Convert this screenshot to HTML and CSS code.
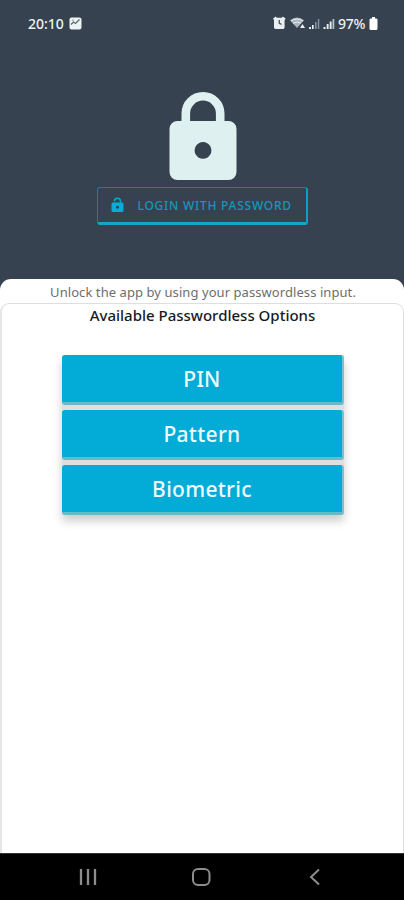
FILE: index.html
```html
<!DOCTYPE html>
<html lang="en">
<head>
<meta charset="utf-8">
<title>Unlock</title>
<link rel="stylesheet" href="styles.css">
</head>
<body>
<div class="phone">
  <div class="status">
    <span class="time">20:10</span>
    <svg class="photo" width="13" height="13" viewBox="0 0 13 13"><rect x=".5" y=".5" width="12" height="12" rx="2" fill="#eef3f5"/><path d="M2 7.500 4.500 5l2 1.500L10.500 2.500" fill="none" stroke="#5c6873" stroke-width="1.300"/><circle cx="4" cy="3.300" r=".8" fill="#7c8790"/></svg>
    <svg class="signals" width="62" height="14" viewBox="0 0 62 14" fill="#e9eef1">
      <path d="M0 2.500 2.800.5l1 1.300h5l1-1.300 2.800 2-1 1.700v7.600l-1 1.200H2l-1-1.200V4.200z"/>
      <path d="M6.300 4v3.400l2.200 1" fill="none" stroke="#46525f" stroke-width="1.300"/>
      <path d="M17 4.200Q24 -1 31 4.200L24 12z" fill="#a9b4bb"/><path d="M18 5q6-4 12 0M20 7.300q4-2.800 8 0" fill="none" stroke="#e9eef1"/>
      <path d="m27 12 2.500-4 2.500 4z"/>
      <path d="M36 11h2v2h-2zM39 9h1.700v4H39z"/><path d="M42 6h1.600v7H42zM44.800 3h1.500v10h-1.500z" fill="#84919b"/>
      <path d="M50.500 11h2v2h-2zM53.700 8h1.900v5h-1.900zM56.700 5.500h1.900V13h-1.900z"/><path d="M59.500 3h1.800v10h-1.800z" fill="#b5c0c8"/>
    </svg>
    <span class="percent">97%</span>
    <svg class="battery" width="9" height="13" viewBox="0 0 9 13"><path d="M3 0h3v1.500h1.500Q8.500 1.500 8.500 3v8.500q0 1.500-1.500 1.500H2Q.5 13 .5 11.500V3q0-1.500 1-1.500H3z" fill="#fff"/></svg>
  </div>
  <div class="hero">
    <svg class="lock" width="68" height="88" viewBox="0 0 68 88"><path d="M16.800 31V21.500a17.200 17.200 0 0 1 34.400 0V31" fill="none" stroke="#dff0f1" stroke-width="8.600"/><path fill-rule="evenodd" fill="#dff0f1" d="M8.500 29h51a8 8 0 0 1 8 8v43a8 8 0 0 1-8 8h-51a8 8 0 0 1-8-8V37a8 8 0 0 1 8-8zM34 50a8.400 8.400 0 1 0 .01 0z"/></svg>
    <button class="login">
      <svg width="13" height="16" viewBox="0 0 13 16"><path d="M3.500 4.300a3 3 0 0 1 6-.3v2" fill="none" stroke="#08a9d1" stroke-width="1.500"/><path fill-rule="evenodd" fill="#08acd5" d="M2 5.500h9Q12.500 5.500 12.500 7v6.500q0 1.500-1.500 1.500H2Q.5 15 .5 13.500V7Q.5 5.500 2 5.500zM6.500 8.700a1.500 1.500 0 1 0 .01 0z"/></svg>
      <span>LOGIN WITH PASSWORD</span>
    </button>
  </div>
  <main class="sheet">
    <p class="hint">Unlock the app by using your passwordless input.</p>
    <section class="panel">
      <h1>Available Passwordless Options</h1>
      <div class="options">
        <button class="option">PIN</button>
        <button class="option">Pattern</button>
        <button class="option">Biometric</button>
      </div>
    </section>
  </main>
  <nav class="nav">
    <svg width="404" height="47" viewBox="0 0 404 47" fill="none" stroke="#8d8d8d" stroke-width="2"><path d="M81 16v16M88 16v16M95 16v16" stroke-width="2.300"/><rect x="193" y="16" width="16.500" height="16" rx="5"/><path d="m319 16.500-8 7.500 8 7.500"/></svg>
  </nav>
</div>
</body>
</html>
```
FILE: styles.css
```css
* { box-sizing: border-box; }
body { margin: 0; font-family: "Noto Sans", sans-serif; }
button { font-family: inherit; cursor: pointer; }
.phone { width: 404px; height: 900px; display: flex; flex-direction: column; background: #36424f; overflow: hidden; }
.status { height: 46px; flex: none; display: flex; align-items: center; padding: 0 26px 0 28px; color: #edf2f5; font-size: 14px; }
.time { width: 41px; font-weight: 500; }
.signals { margin-left: auto; margin-right: 3px; }
.percent { letter-spacing: -.2px; width: 30px; margin-right: 1px; white-space: nowrap; font-weight: 500; }
.hero { height: 233px; flex: none; padding-top: 46px; display: flex; flex-direction: column; align-items: center; }
.lock { flex: none; margin-left: 2px; }
.login { width: 211px; height: 38px; margin-top: 7px; padding: 0 0 0 13px; display: flex; align-items: center; gap: 14px; background: transparent; border: 1px solid #197f9d; border-right: 2px solid #0f9fc4; border-bottom: 3px solid #13a5ca; border-radius: 3px; color: #1597b9; font-size: 12px; font-weight: 500; letter-spacing: .75px; white-space: nowrap; }
.sheet { height: 574px; flex: none; background: #fff; border-radius: 11px 11px 0 0; display: flex; flex-direction: column; }
.hint { margin: 0; padding-left: 2px; height: 24px; line-height: 26px; text-align: center; font-size: 13px; color: #6e6e6e; letter-spacing: .07px; white-space: nowrap; }
.panel { flex: 1; border: 1px solid #dedede; border-left: 2px solid #e5e5e5; border-bottom: 0; border-radius: 9px 9px 0 0; }
h1 { margin: 0; height: 51px; line-height: 22px; text-align: center; font-size: 15px; font-weight: 500; color: #171b1f; white-space: nowrap; }
.options { width: 282px; margin-left: 60px; display: flex; flex-direction: column; gap: 5px; background: #e0dfdc; box-shadow: 0 6px 10px rgba(0,0,0,.2); border-radius: 3px; }
.option { height: 50px; padding: 0; border: 0; border-right: 2px solid #79c1d1; border-bottom: 3px solid #6bb8c9; border-radius: 3px; background: #03acd6; color: #effaff; font-size: 21px; font-weight: 500; letter-spacing: .3px; }
.nav { height: 47px; flex: none; background: #000; border-top: 1px solid #333; }
.nav svg { display: block; margin-top: -1px; }
```
